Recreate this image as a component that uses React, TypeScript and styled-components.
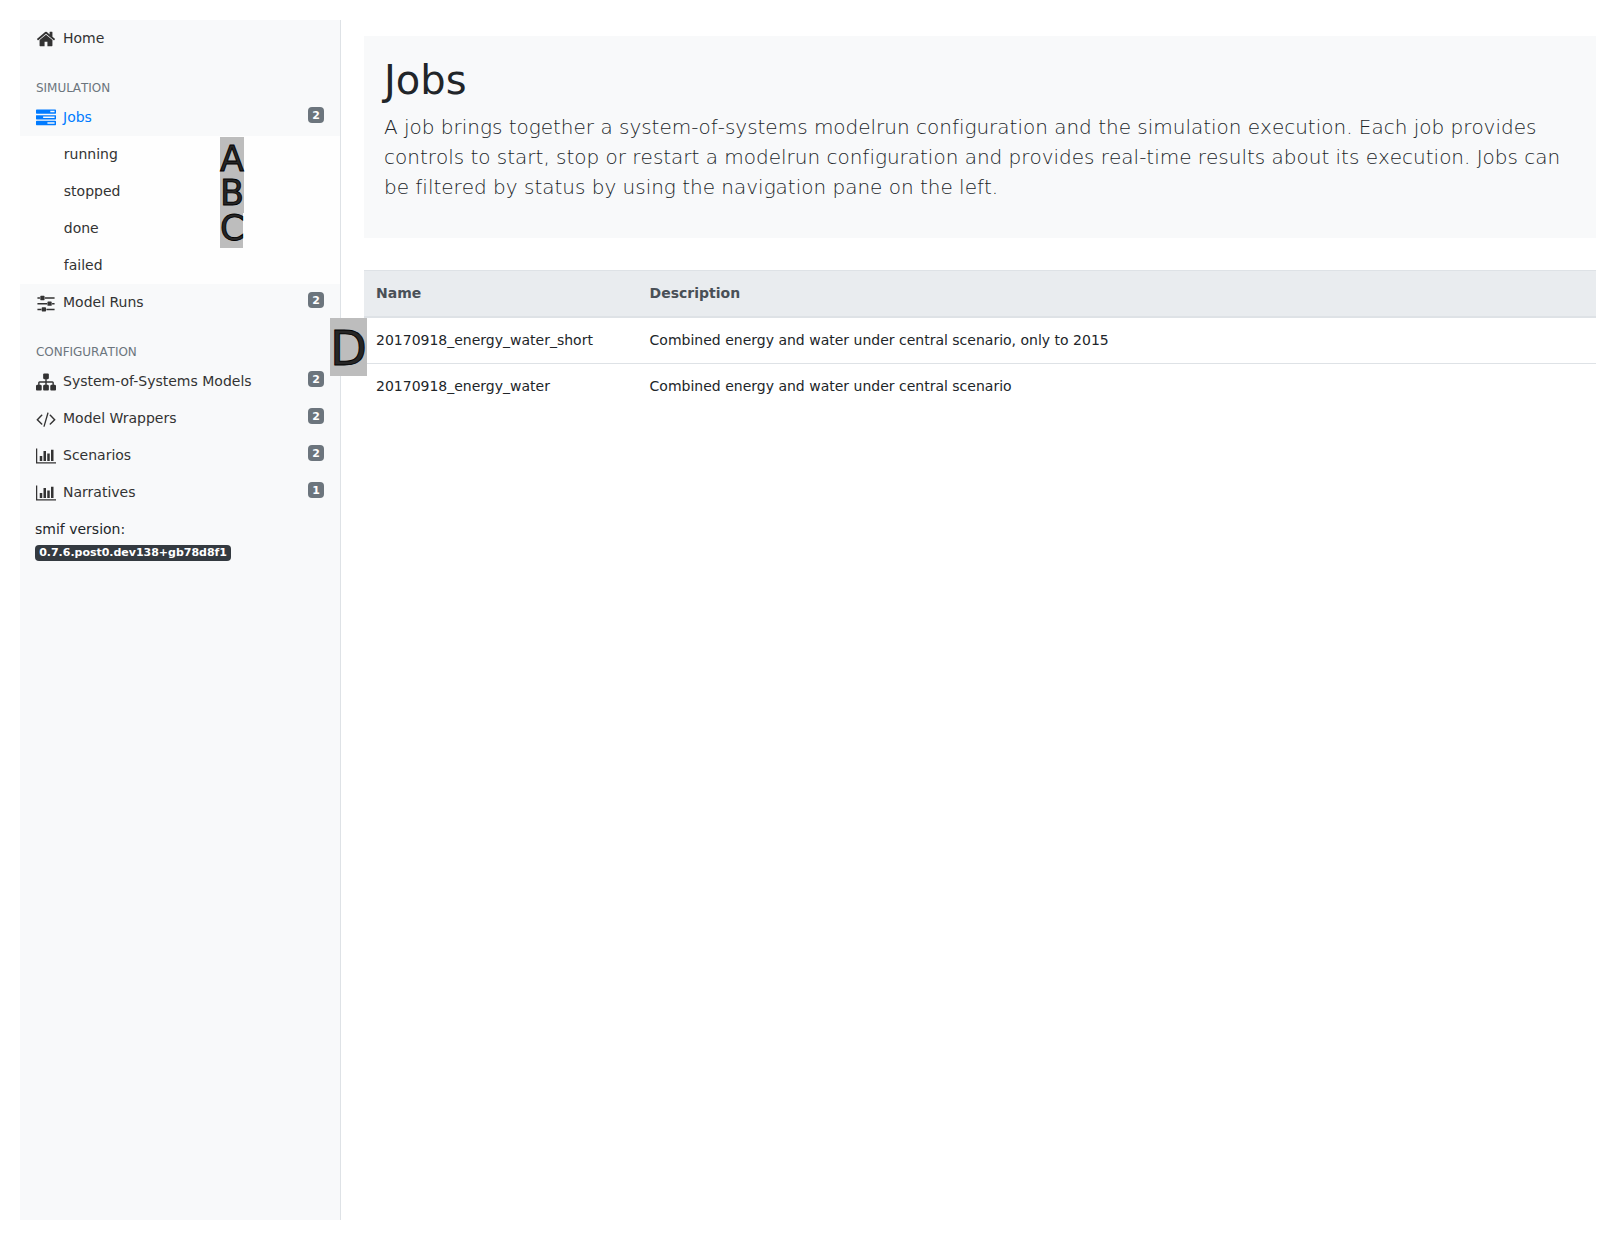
import React from "react";
import styled, { createGlobalStyle } from "styled-components";

const Global = createGlobalStyle`
  * { box-sizing: border-box; }
  body {
    margin: 0;
    background: #fff;
    color: #212529;
    font-family: "DejaVu Sans", sans-serif;
    font-size: 14px;
    line-height: 21px;
  }
`;

const Page = styled.div`
  position: relative;
  display: flex;
  height: 1240px;
  padding: 20px;
`;

const Sidebar = styled.nav`
  flex: 0 0 321px;
  background: #f8f9fa;
  border-right: 1px solid #dee2e6;
`;

const NavLink = styled.a<{ $active?: boolean }>`
  display: flex;
  align-items: flex-start;
  height: 37px;
  padding: 8px 16px;
  color: ${(p) => (p.$active ? "#007bff" : "#333")};
  text-decoration: none;
`;

const NavLabel = styled.span`
  flex: 1;
  margin-left: 7px;
`;

const NavIcon = styled.svg`
  width: 20px;
  height: 20px;
  margin-top: 1px;
  fill: currentColor;
`;

const Badge = styled.span<{ $dark?: boolean }>`
  display: inline-block;
  padding: 2.5px 4.2px;
  border-radius: 4px;
  background: ${(p) => (p.$dark ? "#343a40" : "#6c757d")};
  color: #fff;
  font-size: 11px;
  font-weight: 700;
  line-height: 11px;
  letter-spacing: ${(p) => (p.$dark ? "-0.02px" : "normal")};
`;

const SectionTitle = styled.h6`
  margin: 24px 16px 4px;
  color: #6c757d;
  font-size: 12px;
  font-weight: 400;
  font-kerning: none;
  letter-spacing: -0.03px;
  line-height: 14px;
  text-transform: uppercase;
`;

const SubMenu = styled.div`
  background: #fefefe;
`;

const SubLink = styled.a`
  display: block;
  height: 37px;
  padding: 8px 16px 8px 43.8px;
  color: #333;
`;

const Version = styled.div`
  padding: 8px 15px;
`;

const VersionLabel = styled.div`
  margin-bottom: 1px;
`;

const Main = styled.main`
  flex: 1;
  padding: 16px 0 0 23px;
`;

const Intro = styled.header`
  height: 202px;
  padding: 20px;
  background: #f8f9fa;
`;

const Title = styled.h1`
  margin: 0 0 8px;
  font-size: 40px;
  font-weight: 400;
  line-height: 48px;
`;

const Lead = styled.p`
  margin: 0;
  font-size: 20px;
  font-weight: 300;
  font-kerning: none;
  font-variant-ligatures: none;
  letter-spacing: -0.01px;
  line-height: 30px;
`;

const Table = styled.div`
  margin-top: 32px;
`;

const Row = styled.div`
  display: grid;
  grid-template-columns: 273.6px 1fr;
  & + & { border-top: 1px solid #dee2e6; }
`;

const HeadRow = styled(Row)`
  background: #e9ecef;
  border-top: 1px solid #dee2e6;
  border-bottom: 2px solid #dee2e6;
  color: #495057;
  font-weight: 700;
`;

const Cell = styled.div`
  padding: 12px;
`;

const Marker = styled.span<{ $x: number; $y: number; $w: number; $h: number; $size: number; $line: number }>`
  position: absolute;
  left: ${(p) => p.$x}px;
  top: ${(p) => p.$y}px;
  width: ${(p) => p.$w}px;
  height: ${(p) => p.$h}px;
  background: #bdbdbd;
  color: #262626;
  font-size: ${(p) => p.$size}px;
  line-height: ${(p) => p.$line}px;
  -webkit-text-stroke: 0.9px #000;
`;

const icons = {
  home: { box: "0 0 1792 1792", d: "M1472 992v480q0 26-19 45t-45 19h-384v-384h-256v384h-384q-26 0-45-19t-19-45v-480q0-1 .5-3t.5-3l575-474 575 474q1 2 1 6zm223-69l-62 74q-8 9-21 11h-3q-13 0-21-7l-692-577-692 577q-12 8-24 7-13-2-21-11l-62-74q-8-10-7-23.5t11-21.5l719-599q32-26 76-26t76 26l244 204v-195q0-14 9-23t23-9h192q14 0 23 9t9 23v408l219 182q10 8 11 21.5t-7 23.5z" },
  tasks: { box: "0 0 1792 1792", d: "M1024 1408h640v-128h-640v128zm-384-512h1024v-128h-1024v128zm640-512h384v-128h-384v128zm512 832v256q0 26-19 45t-45 19h-1664q-26 0-45-19t-19-45v-256q0-26 19-45t45-19h1664q26 0 45 19t19 45zm0-512v256q0 26-19 45t-45 19h-1664q-26 0-45-19t-19-45v-256q0-26 19-45t45-19h1664q26 0 45 19t19 45zm0-512v256q0 26-19 45t-45 19h-1664q-26 0-45-19t-19-45v-256q0-26 19-45t45-19h1664q26 0 45 19t19 45z" },
  sliders: { box: "0 0 1792 1792", d: "M480 1408v128h-352v-128h352zm352-128q26 0 45 19t19 45v256q0 26-19 45t-45 19h-256q-26 0-45-19t-19-45v-256q0-26 19-45t45-19h256zm160-384v128h-864v-128h864zm-640-512v128h-224v-128h224zm1312 1024v128h-736v-128h736zm-960-1152q26 0 45 19t19 45v256q0 26-19 45t-45 19h-256q-26 0-45-19t-19-45v-256q0-26 19-45t45-19h256zm640 512q26 0 45 19t19 45v256q0 26-19 45t-45 19h-256q-26 0-45-19t-19-45v-256q0-26 19-45t45-19h256zm320 128v128h-224v-128h224zm0-512v128h-864v-128h864z" },
  sitemap: { box: "0 0 1792 1792", d: "M1792 1248v320q0 40-28 68t-68 28h-320q-40 0-68-28t-28-68v-320q0-40 28-68t68-28h96v-192h-512v192h96q40 0 68 28t28 68v320q0 40-28 68t-68 28h-320q-40 0-68-28t-28-68v-320q0-40 28-68t68-28h96v-192h-512v192h96q40 0 68 28t28 68v320q0 40-28 68t-68 28h-320q-40 0-68-28t-28-68v-320q0-40 28-68t68-28h96v-192q0-52 38-90t90-38h512v-192h-96q-40 0-68-28t-28-68v-320q0-40 28-68t68-28h320q40 0 68 28t28 68v320q0 40-28 68t-68 28h-96v192h512q52 0 90 38t38 90v192h96q40 0 68 28t28 68z" },
  code: { box: "-64 0 1920 1792", d: "M553 1399l-50 50q-10 10-23 10t-23-10l-466-466q-10-10-10-23t10-23l466-466q10-10 23-10t23 10l50 50q10 10 10 23t-10 23l-393 393 393 393q10 10 10 23t-10 23zm591-1067l-373 1291q-4 13-15.5 19.5t-23.5 2.5l-62-17q-13-4-19.5-15.5t-2.5-24.5l373-1291q4-13 15.5-19.5t23.5-2.5l62 17q13 4 19.5 15.5t2.5 24.5zm657 651l-466 466q-10 10-23 10t-23-10l-50-50q-10-10-10-23t10-23l393-393-393-393q-10-10-10-23t10-23l50-50q10-10 23-10t23 10l466 466q10 10 10 23t-10 23z" },
  chart: { box: "0 0 2048 1792", d: "M640 896v512h-256v-512h256zm384-512v1024h-256v-1024h256zm1024 1152v128h-2048v-1536h128v1408h1920zm-640-896v768h-256v-768h256zm384-384v1152h-256v-1152h256z" },
};

function NavItem(props: { icon: keyof typeof icons; label: string; count?: number; active?: boolean }) {
  const icon = icons[props.icon];
  return (
    <NavLink $active={props.active}>
      <NavIcon viewBox={icon.box}>
        <path d={icon.d} />
      </NavIcon>
      <NavLabel>{props.label}</NavLabel>
      {props.count !== undefined && <Badge>{props.count}</Badge>}
    </NavLink>
  );
}

const statuses = ["running", "stopped", "done", "failed"];

const jobs = [
  { name: "20170918_energy_water_short", description: "Combined energy and water under central scenario, only to 2015" },
  { name: "20170918_energy_water", description: "Combined energy and water under central scenario" },
];

export default function App() {
  return (
    <Page>
      <Global />
      <Sidebar>
        <NavItem icon="home" label="Home" />
        <SectionTitle>Simulation</SectionTitle>
        <NavItem icon="tasks" label="Jobs" count={2} active />
        <SubMenu>
          {statuses.map((s) => (
            <SubLink key={s}>{s}</SubLink>
          ))}
        </SubMenu>
        <NavItem icon="sliders" label="Model Runs" count={2} />
        <SectionTitle>Configuration</SectionTitle>
        <NavItem icon="sitemap" label="System-of-Systems Models" count={2} />
        <NavItem icon="code" label="Model Wrappers" count={2} />
        <NavItem icon="chart" label="Scenarios" count={2} />
        <NavItem icon="chart" label="Narratives" count={1} />
        <Version>
          <VersionLabel>smif version:</VersionLabel>
          <Badge $dark>0.7.6.post0.dev138+gb78d8f1</Badge>
        </Version>
      </Sidebar>
      <Main>
        <Intro>
          <Title>Jobs</Title>
          <Lead>
            A job brings together a system-of-systems modelrun configuration and the simulation execution. Each job
            provides controls to start, stop or restart a modelrun configuration and provides real-time results about
            its execution. Jobs can be filtered by status by using the navigation pane on the left.
          </Lead>
        </Intro>
        <Table>
          <HeadRow>
            <Cell>Name</Cell>
            <Cell>Description</Cell>
          </HeadRow>
          <div>
            {jobs.map((job) => (
              <Row key={job.name}>
                <Cell>{job.name}</Cell>
                <Cell>{job.description}</Cell>
              </Row>
            ))}
          </div>
        </Table>
      </Main>
      <Marker $x={220} $y={137} $w={24} $h={41} $size={35} $line={44}>A</Marker>
      <Marker $x={220} $y={172} $w={24} $h={41} $size={35} $line={43}>B</Marker>
      <Marker $x={220} $y={207} $w={23} $h={41} $size={35} $line={43}>C</Marker>
      <Marker $x={330} $y={318} $w={37} $h={58} $size={48} $line={60}>D</Marker>
    </Page>
  );
}
